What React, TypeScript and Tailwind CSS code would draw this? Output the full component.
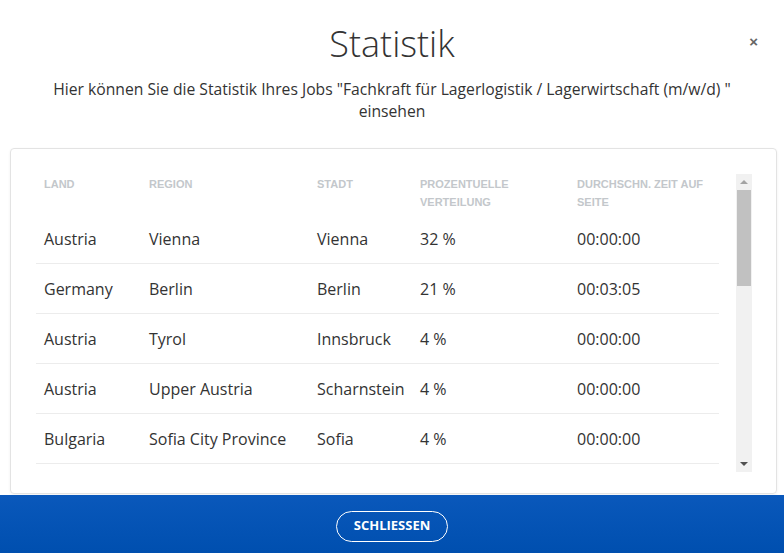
import React from "react";

interface StatRow {
    land: string;
    region: string;
    stadt: string;
    anteil: string;
    zeit: string;
}

const rows: StatRow[] = [
    {land: "Austria", region: "Vienna", stadt: "Vienna", anteil: "32 %", zeit: "00:00:00"},
    {land: "Germany", region: "Berlin", stadt: "Berlin", anteil: "21 %", zeit: "00:03:05"},
    {land: "Austria", region: "Tyrol", stadt: "Innsbruck", anteil: "4 %", zeit: "00:00:00"},
    {land: "Austria", region: "Upper Austria", stadt: "Scharnstein", anteil: "4 %", zeit: "00:00:00"},
    {land: "Bulgaria", region: "Sofia City Province", stadt: "Sofia", anteil: "4 %", zeit: "00:00:00"},
];

const cols = "grid grid-cols-[105px_168px_103px_157px_150px]";

export default function App() {
    return (
        <div className="relative flex h-[553px] w-[784px] flex-col overflow-hidden bg-white font-['Open_Sans',Arial,sans-serif] text-[#333]">
            <button className="absolute right-[26px] top-[34px] font-['Liberation_Sans',Arial,sans-serif] text-[15px] font-bold leading-none text-[#666]">×</button>

            <div className="flex flex-col items-center pt-[24px]">
                <h1 className="text-[36px] leading-[40px] font-light text-[#333]">Statistik</h1>
                <p className="mt-[14px] mb-[26px] px-[20px] text-center text-[15.7px] leading-[22px]">
                    Hier können Sie die Statistik Ihres Jobs "Fachkraft für Lagerlogistik / Lagerwirtschaft (m/w/d) "
                    <br/>einsehen
                </p>
            </div>

            <div className="ml-[10px] mr-[7px] flex h-[346px] rounded-[4px] border border-[#e3e3e3] pt-[25px] pr-[24px] pb-[21px] pl-[25px] shadow-[0_1px_3px_rgba(0,0,0,0.06)]">
                <div className="h-[298px] flex-1 overflow-hidden">
                    <div className={`${cols} h-[40px] pt-[1px] font-['Liberation_Sans',Arial,sans-serif] text-[11px] font-bold uppercase leading-[18px] text-[#c3c7cb]`}>
                        <div className="pl-[8px]">Land</div>
                        <div className="pl-[8px]">Region</div>
                        <div className="pl-[8px]">Stadt</div>
                        <div className="pl-[8px] pr-[20px]">Prozentuelle Verteilung</div>
                        <div className="pl-[8px] pr-[4px]">Durchschn. Zeit auf Seite</div>
                    </div>
                    {rows.map((r, i) => (
                        <div key={i} className={`${cols} h-[50px] items-center border-b border-[#ececec] text-[16px]`}>
                            <div className="pl-[8px]">{r.land}</div>
                            <div className="pl-[8px]">{r.region}</div>
                            <div className="pl-[8px]">{r.stadt}</div>
                            <div className="pl-[8px]">{r.anteil}</div>
                            <div className="pl-[8px]">{r.zeit}</div>
                        </div>
                    ))}
                </div>

                <div className="ml-[17px] flex h-[298px] w-[16px] shrink-0 flex-col bg-[#f1f1f1]">
                    <div className="flex h-[16px] items-center justify-center">
                        <div className="h-0 w-0 border-x-[4px] border-b-[4px] border-x-transparent border-b-[#a3a3a3]"/>
                    </div>
                    <div className="mx-[1px] h-[96px] bg-[#c1c1c1]"/>
                    <div className="flex-1"/>
                    <div className="flex h-[16px] items-center justify-center">
                        <div className="h-0 w-0 border-x-[4px] border-t-[4px] border-x-transparent border-t-[#505050]"/>
                    </div>
                </div>
            </div>

            <div className="mt-auto flex h-[58px] items-center justify-center bg-gradient-to-b from-[#0a58bb] to-[#004faf] pt-[4px]">
                <button className="h-[31px] w-[112px] rounded-full border border-white text-[13px] font-bold text-white">
                    SCHLIESSEN
                </button>
            </div>
        </div>
    );
}
